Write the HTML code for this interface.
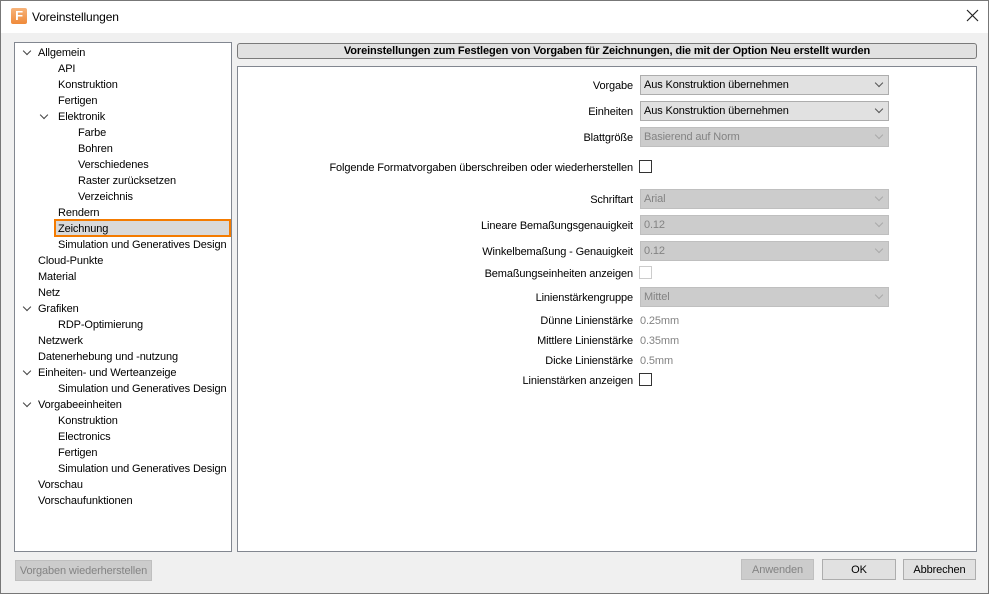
<!DOCTYPE html>
<html><head><meta charset="utf-8"><style>
*{margin:0;padding:0;box-sizing:border-box}
body{width:989px;height:594px;background:#f0f0f0;font-family:"Liberation Sans",Arial,sans-serif;font-size:11px;letter-spacing:-0.12px;color:#000;position:relative;overflow:hidden}
.a{position:absolute;white-space:nowrap}
#title{left:0;top:0;width:989px;height:33px;background:#fff;border:1px solid #888;border-bottom:none}
#win{left:0;top:0;width:989px;height:594px;border:1px solid #777}
.t{position:absolute;line-height:16px;height:16px}
.chev{position:absolute;width:6px;height:6px;border-right:1.3px solid #444;border-bottom:1.3px solid #444;transform:rotate(45deg)}
.lbl{position:absolute;right:356px;text-align:right;line-height:14px}
.cb{position:absolute;left:640px;width:249px;height:20px;border:1px solid #adadad;background:#e1e1e1;padding-left:3px;line-height:19px}
.cb.d{background:#ccc;border-color:#bfbfbf;color:#838383}
.cb i{position:absolute;right:6px;top:4px;width:6px;height:6px;border-right:1px solid #555;border-bottom:1px solid #555;transform:rotate(45deg)}
.cb.d i{border-color:#aaa}
.chk{position:absolute;left:639px;width:13px;height:13px;border:1px solid #333;background:#fff}
.val{position:absolute;left:640px;color:#838383;line-height:14px}
.btn{position:absolute;height:21px;border:1px solid #adadad;background:#e1e1e1;text-align:center;line-height:21px}
</style></head><body>
<div class="a" id="title"></div>
<div class="a" style="left:11px;top:8px;width:16px;height:16px;border-radius:2px;color:#fff;font-weight:bold;font-size:13px;line-height:16px;text-align:center;background:linear-gradient(#f7b37a,#ef8a3a)">F</div>
<div class="a" style="left:32px;top:9px;font-size:12px;line-height:16px">Voreinstellungen</div>
<svg class="a" style="left:966px;top:9px" width="13" height="13"><path d="M1 1L12 12M12 1L1 12" stroke="#222" stroke-width="1.2"/></svg>

<div class="a" style="left:14px;top:42px;width:218px;height:510px;background:#fff;border:1px solid #828790"></div>
<div class="a" style="left:54px;top:219px;width:177px;height:18px;background:#d9d9d9;border:2px solid #f47b00"></div>
<div class="a" style="left:0;top:45px;width:240px">
<div class="chev" style="left:24px;top:3px"></div><div class="t" style="left:38px;top:0">Allgemein</div>
<div class="t" style="left:58px;top:16px">API</div>
<div class="t" style="left:58px;top:32px">Konstruktion</div>
<div class="t" style="left:58px;top:48px">Fertigen</div>
<div class="chev" style="left:41px;top:67px"></div><div class="t" style="left:58px;top:64px">Elektronik</div>
<div class="t" style="left:78px;top:80px">Farbe</div>
<div class="t" style="left:78px;top:96px">Bohren</div>
<div class="t" style="left:78px;top:112px">Verschiedenes</div>
<div class="t" style="left:78px;top:128px">Raster zurücksetzen</div>
<div class="t" style="left:78px;top:144px">Verzeichnis</div>
<div class="t" style="left:58px;top:160px">Rendern</div>
<div class="t" style="left:58px;top:176px">Zeichnung</div>
<div class="t" style="left:58px;top:192px">Simulation und Generatives Design</div>
<div class="t" style="left:38px;top:208px">Cloud-Punkte</div>
<div class="t" style="left:38px;top:224px">Material</div>
<div class="t" style="left:38px;top:240px">Netz</div>
<div class="chev" style="left:24px;top:259px"></div><div class="t" style="left:38px;top:256px">Grafiken</div>
<div class="t" style="left:58px;top:272px">RDP-Optimierung</div>
<div class="t" style="left:38px;top:288px">Netzwerk</div>
<div class="t" style="left:38px;top:304px">Datenerhebung und -nutzung</div>
<div class="chev" style="left:24px;top:323px"></div><div class="t" style="left:38px;top:320px">Einheiten- und Werteanzeige</div>
<div class="t" style="left:58px;top:336px">Simulation und Generatives Design</div>
<div class="chev" style="left:24px;top:355px"></div><div class="t" style="left:38px;top:352px">Vorgabeeinheiten</div>
<div class="t" style="left:58px;top:368px">Konstruktion</div>
<div class="t" style="left:58px;top:384px">Electronics</div>
<div class="t" style="left:58px;top:400px">Fertigen</div>
<div class="t" style="left:58px;top:416px">Simulation und Generatives Design</div>
<div class="t" style="left:38px;top:432px">Vorschau</div>
<div class="t" style="left:38px;top:448px">Vorschaufunktionen</div>
</div>

<div class="a" style="left:237px;top:43px;width:740px;height:16px;background:#e1e1e1;border:1px solid #7a7a7a;border-radius:3px;text-align:center;font-weight:bold;line-height:15px">Voreinstellungen zum Festlegen von Vorgaben für Zeichnungen, die mit der Option Neu erstellt wurden</div>
<div class="a" style="left:237px;top:66px;width:740px;height:486px;background:#fff;border:1px solid #828790"></div>

<div class="lbl" style="top:79px">Vorgabe</div><div class="cb" style="top:75px">Aus Konstruktion übernehmen<i></i></div>
<div class="lbl" style="top:105px">Einheiten</div><div class="cb" style="top:101px">Aus Konstruktion übernehmen<i></i></div>
<div class="lbl" style="top:131px">Blattgröße</div><div class="cb d" style="top:127px">Basierend auf Norm<i></i></div>
<div class="lbl" style="top:161px">Folgende Formatvorgaben überschreiben oder wiederherstellen</div><div class="chk" style="top:160px"></div>
<div class="lbl" style="top:193px">Schriftart</div><div class="cb d" style="top:189px">Arial<i></i></div>
<div class="lbl" style="top:219px">Lineare Bemaßungsgenauigkeit</div><div class="cb d" style="top:215px">0.12<i></i></div>
<div class="lbl" style="top:245px">Winkelbemaßung - Genauigkeit</div><div class="cb d" style="top:241px">0.12<i></i></div>
<div class="lbl" style="top:267px">Bemaßungseinheiten anzeigen</div><div class="chk" style="top:266px;border-color:#ccc"></div>
<div class="lbl" style="top:291px">Linienstärkengruppe</div><div class="cb d" style="top:287px">Mittel<i></i></div>
<div class="lbl" style="top:314px">Dünne Linienstärke</div><div class="val" style="top:314px">0.25mm</div>
<div class="lbl" style="top:334px">Mittlere Linienstärke</div><div class="val" style="top:334px">0.35mm</div>
<div class="lbl" style="top:354px">Dicke Linienstärke</div><div class="val" style="top:354px">0.5mm</div>
<div class="lbl" style="top:374px">Linienstärken anzeigen</div><div class="chk" style="top:373px"></div>

<div class="btn" style="left:15px;top:560px;width:137px;background:#ccc;border-color:#bfbfbf;color:#838383">Vorgaben wiederherstellen</div>
<div class="btn" style="left:741px;top:559px;width:73px;background:#ccc;border-color:#bfbfbf;color:#838383">Anwenden</div>
<div class="btn" style="left:822px;top:559px;width:74px">OK</div>
<div class="btn" style="left:903px;top:559px;width:73px">Abbrechen</div>
<div class="a" id="win" style="pointer-events:none"></div>
</body></html>
